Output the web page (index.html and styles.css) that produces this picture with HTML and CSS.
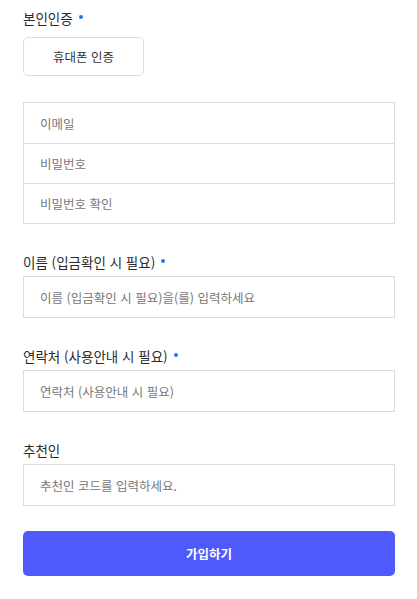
FILE: index.html
```html
<!DOCTYPE html>
<html lang="ko">
<head>
<meta charset="utf-8">
<title>회원가입</title>
<link rel="stylesheet" href="styles.css">
</head>
<body>
<form class="signup">
  <div class="label">본인인증<span class="req"></span></div>
  <button type="button" class="verify">휴대폰 인증</button>

  <div class="group">
    <div class="row">이메일</div>
    <div class="row">비밀번호</div>
    <div class="row">비밀번호 확인</div>
  </div>

  <div class="field">
    <div class="label">이름 (입금확인 시 필요)<span class="req"></span></div>
    <div class="input">이름 (입금확인 시 필요)을(를) 입력하세요</div>
  </div>

  <div class="field">
    <div class="label">연락처 (사용안내 시 필요)<span class="req"></span></div>
    <div class="input">연락처 (사용안내 시 필요)</div>
  </div>

  <div class="field">
    <div class="label">추천인</div>
    <div class="input">추천인 코드를 입력하세요.</div>
  </div>

  <button type="button" class="submit">가입하기</button>
</form>
</body>
</html>
```
FILE: styles.css
```css
* { box-sizing: border-box; }
html, body { margin: 0; background: #fff; }
body {
  font-family: "Noto Sans CJK KR", "Noto Sans", sans-serif;
  color: #222;
}
.signup {
  padding: 8px 22px 0 23px;
  display: flex;
  flex-direction: column;
}
.label {
  font-size: 13.5px;
  line-height: 20px;
  height: 20px;
  color: #2a2a2a;
  display: flex;
  align-items: center;
}
.req {
  width: 4px;
  height: 4px;
  border-radius: 50%;
  background: #2a73e8;
  margin-left: 6px;
  margin-top: -2px;
}
.verify {
  margin-top: 9px;
  width: 121px;
  height: 39px;
  border: 1px solid #dcdcdc;
  border-radius: 5px;
  background: #fff;
  font-family: inherit;
  font-size: 12.5px;
  color: #333;
  padding: 0;
}
.group {
  margin-top: 26px;
  border: 1px solid #dcdcdc;
}
.row {
  height: 40px;
  display: flex;
  align-items: center;
  padding-left: 16px;
  font-size: 12.5px;
  color: #777;
}
.row + .row { border-top: 1px solid #dcdcdc; }
.field {
  margin-top: 28px;
  display: flex;
  flex-direction: column;
  gap: 4px;
}
.input {
  height: 42px;
  border: 1px solid #dcdcdc;
  display: flex;
  align-items: center;
  padding-left: 16px;
  font-size: 12.5px;
  color: #777;
}
.submit {
  margin-top: 25px;
  height: 45px;
  border: 0;
  border-radius: 5px;
  background: #5059fc;
  color: #fff;
  font-family: inherit;
  font-size: 12.5px;
  font-weight: 700;
  padding: 0;
}
```
